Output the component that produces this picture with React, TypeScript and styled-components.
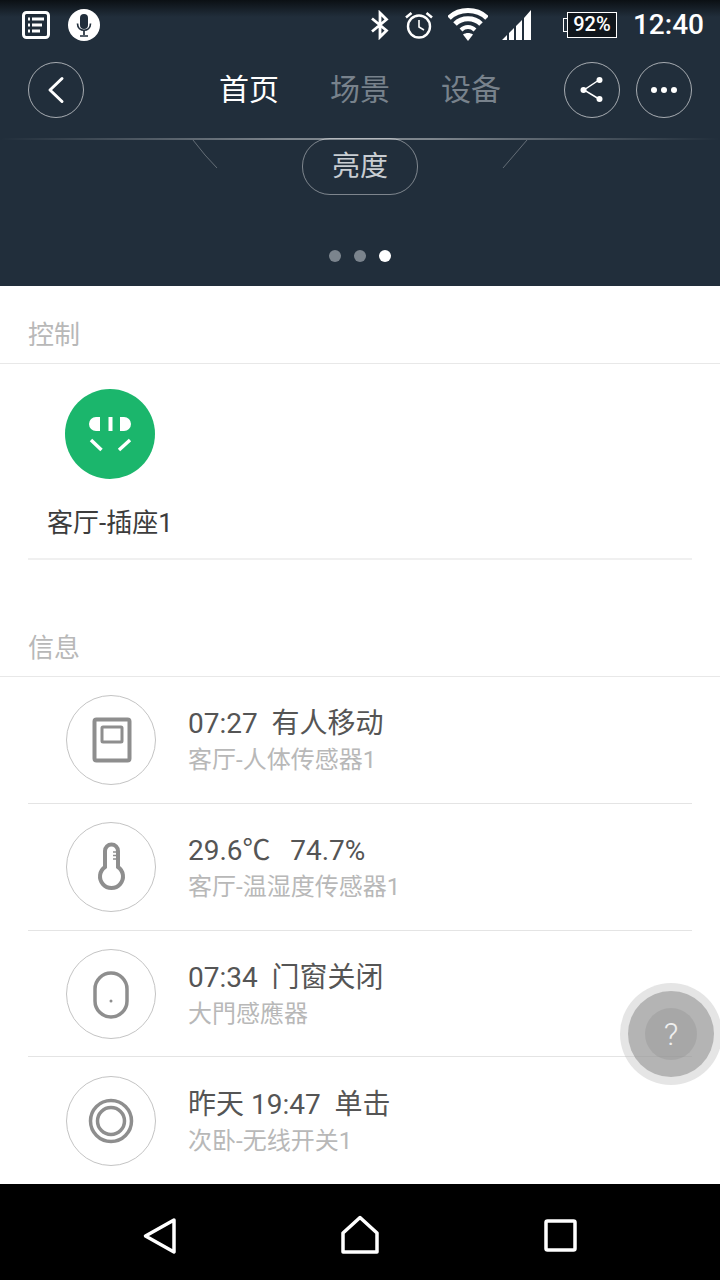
import React from "react";
import styled, { createGlobalStyle } from "styled-components";

const GlobalStyle = createGlobalStyle`
  html, body {
    margin: 0;
    padding: 0;
    background: #ffffff;
  }
  * {
    box-sizing: border-box;
  }
`;

const CJK = `Roboto, "Noto Sans CJK SC", sans-serif`;

const infoRows = [
  { title: "07:27  有人移动", sub: "客厅-人体传感器1", kind: "sensor" },
  { title: "29.6℃  \u200974.7%", sub: "客厅-温湿度传感器1", kind: "temp" },
  { title: "07:34  门窗关闭", sub: "大門感應器", kind: "door", short: true },
  { title: "昨天 19:47  单击", sub: "次卧-无线开关1", kind: "switch" },
];

function RowIcon({ kind }: { kind: string }) {
  return (
    <svg width="88" height="88" viewBox="1 1 88 88" fill="none" stroke="#8e8e8e">
      {kind === "sensor" && (
        <>
          <rect x="28.5" y="24.5" width="35" height="41" rx="2" strokeWidth="4" />
          <rect x="36" y="32" width="20" height="15" rx="1" strokeWidth="3" />
        </>
      )}
      {kind === "temp" && (
        <>
          <path
            d="M39 45V29a6.5 6.5 0 0 1 13 0V45a11.5 11.5 0 1 1-13 0Z"
            strokeWidth="4"
          />
          <path d="M47 30h5M47 33.500h5M47 37h5" strokeWidth="1.5" />
        </>
      )}
      {kind === "door" && (
        <>
          <rect x="29" y="24" width="32" height="44" rx="16" strokeWidth="3.500" />
          <circle cx="45" cy="52" r="1.500" fill="#8e8e8e" stroke="none" />
        </>
      )}
      {kind === "switch" && (
        <>
          <circle cx="45" cy="45" r="20.500" strokeWidth="3.500" />
          <circle cx="45" cy="45" r="13.500" strokeWidth="3.500" />
        </>
      )}
    </svg>
  );
}

function App() {
  return (
    <Page>
      <GlobalStyle />
      <Header>
        <StatusBar>
          <StatusLeft>
            <svg width="30" height="30" viewBox="0 0 30 30">
              <rect x="2.500" y="2.500" width="25" height="25" rx="3" fill="none" stroke="#fff" strokeWidth="3" />
              <path d="M7 9h2M7 15h2M7 21h2" stroke="#fff" strokeWidth="3" />
              <path d="M11 9h12M11 15h10M11 21h8" stroke="#fff" strokeWidth="3" />
            </svg>
            <svg width="32" height="32" viewBox="0 0 32 32">
              <circle cx="16" cy="16" r="16" fill="#fff" />
              <rect x="12" y="5" width="8" height="15" rx="4" fill="#212e3b" />
              <path d="M9.500 14.500c0 9 13 9 13 0M16 22v4M12 27h8" fill="none" stroke="#212e3b" strokeWidth="1.700" />
            </svg>
          </StatusLeft>
          <StatusRight>
            <svg width="20" height="30" viewBox="0 0 20 30">
              <path d="M2 8.500 16.500 20.500 10 27V3l6.500 6.500L2 21.500" fill="none" stroke="#fff" strokeWidth="2.800" />
            </svg>
            <svg width="30" height="30" viewBox="0 0 30 30">
              <circle cx="15" cy="16.500" r="11" fill="none" stroke="#fff" strokeWidth="2.400" />
              <path d="M15 10v7l5 3" fill="none" stroke="#fff" strokeWidth="1.600" />
              <path d="M2 7.500 7.500 3M28 7.500 22.500 3" fill="none" stroke="#fff" strokeWidth="2.600" />
            </svg>
            <svg width="40" height="34" viewBox="0 0 40 34">
              <path d="M1 10C11 0 29 0 39 10" fill="none" stroke="#fff" strokeWidth="5" />
              <path d="M7 16C14 9 26 9 33 16" fill="none" stroke="#fff" strokeWidth="5" />
              <path d="M13 22C17 18 23 18 27 22" fill="none" stroke="#fff" strokeWidth="4" />
              <path d="M15 26.500C18 24.500 22 24.500 25 26.500L20 33Z" fill="#fff" />
            </svg>
            <svg width="30" height="30" viewBox="0 0 30 30">
              <path d="M0 30 5 25V30ZM7 23 12 18V30H7ZM14 16 20 10V30H14ZM22 8 29 0V30H22Z" fill="#fff" />
            </svg>
            <Battery>
              <BatteryNub />
              <BatteryBody>92%</BatteryBody>
            </Battery>
            <Clock>12:40</Clock>
          </StatusRight>
        </StatusBar>

        <NavRow>
          <NavSide>
            <CircleButton>
              <svg width="28" height="32" viewBox="0 0 28 32">
                <path d="M20 4.500 8 16l12 11.500" fill="none" stroke="#fff" strokeWidth="3" strokeLinecap="round" strokeLinejoin="round" />
              </svg>
            </CircleButton>
          </NavSide>
          <Tabs>
            <Tab $active>首页</Tab>
            <Tab>场景</Tab>
            <Tab>设备</Tab>
          </Tabs>
          <NavSide $right>
            <CircleButton>
              <svg width="30" height="30" viewBox="0 0 30 30" fill="#fff">
                <path d="M22 5 7 15l15 9" fill="none" stroke="#fff" strokeWidth="1.500" />
                <circle cx="6.500" cy="15" r="3" />
                <circle cx="22.500" cy="5" r="3" />
                <circle cx="22.500" cy="24" r="3" />
              </svg>
            </CircleButton>
            <CircleButton>
              <svg width="30" height="10" viewBox="0 0 30 10" fill="#fff">
                <circle cx="5" cy="5" r="3" />
                <circle cx="15" cy="5" r="3" />
                <circle cx="25" cy="5" r="3" />
              </svg>
            </CircleButton>
          </NavSide>
        </NavRow>

        <Gauge>
          <GaugeLines width="720" height="32" viewBox="0 0 720 32">
            <defs>
              <linearGradient id="gaugeLine" x1="0" x2="1" y1="0" y2="0">
                <stop offset="0" stopColor="#fff" stopOpacity="0" />
                <stop offset="0.4" stopColor="#fff" stopOpacity="0.42" />
                <stop offset="0.6" stopColor="#fff" stopOpacity="0.42" />
                <stop offset="1" stopColor="#fff" stopOpacity="0" />
              </linearGradient>
            </defs>
            <rect x="0" y="0" width="720" height="2" fill="url(#gaugeLine)" />
            <path d="M193 2 205 17 217 30M527 2 515 16 503 30" fill="none" stroke="#fff" strokeOpacity="0.3" strokeWidth="1" />
          </GaugeLines>
          <Pill>亮度</Pill>
        </Gauge>

        <Dots>
          <Dot />
          <Dot />
          <Dot $active />
        </Dots>
      </Header>

      <Body>
        <SectionTitle>控制</SectionTitle>
        <ControlBlock>
          <ControlItem>
            <svg width="90" height="90" viewBox="0 0 90 90">
              <circle cx="45" cy="45" r="45" fill="#1bb66c" />
              <path d="M35 28h-4a7 7 0 0 0 0 14h4ZM55 28h4a7 7 0 0 1 0 14h-4Z" fill="#fff" />
              <rect x="43.500" y="28" width="4" height="14" fill="#fff" />
              <path d="M26 51 36.500 61M65 51 54 61" stroke="#fff" strokeWidth="3.500" />
            </svg>
            <ControlLabel>客厅-插座1</ControlLabel>
          </ControlItem>
        </ControlBlock>

        <SectionTitle $spaced>信息</SectionTitle>
        {infoRows.map((row, i) => (
          <InfoRow key={row.sub} $last={i === infoRows.length - 1} $short={row.short}>
            <IconRing>
              <RowIcon kind={row.kind} />
            </IconRing>
            <InfoText>
              <InfoTitle>{row.title}</InfoTitle>
              <InfoSub>{row.sub}</InfoSub>
            </InfoText>
          </InfoRow>
        ))}
      </Body>

      <BottomNav>
        <svg width="40" height="42" viewBox="0 0 40 42">
          <path d="M34 6 5.500 22 34 38Z" fill="none" stroke="#fff" strokeWidth="3.500" strokeLinejoin="round" />
        </svg>
        <svg width="40" height="42" viewBox="0 0 40 42">
          <path d="M20 3.500 37 19V38H3V19Z" fill="none" stroke="#fff" strokeWidth="3.500" strokeLinejoin="round" />
        </svg>
        <svg width="40" height="42" viewBox="0 0 40 42">
          <rect x="6" y="7" width="29" height="29" rx="1.500" fill="none" stroke="#fff" strokeWidth="3.500" />
        </svg>
      </BottomNav>

      <Fab>
        <FabInner>
          <FabCore>?</FabCore>
        </FabInner>
      </Fab>
    </Page>
  );
}

export default App;

const Page = styled.div`
  position: relative;
  width: 720px;
  height: 1280px;
  overflow: hidden;
  display: flex;
  flex-direction: column;
  background: #ffffff;
  font-family: ${CJK};
`;

const Header = styled.div`
  height: 286px;
  flex-shrink: 0;
  background: linear-gradient(#0b1014 0, #212e3b 17px);
  background-color: #212e3b;
  display: flex;
  flex-direction: column;
`;

const StatusBar = styled.div`
  height: 50px;
  display: flex;
  align-items: center;
  justify-content: space-between;
  padding: 0 16px 0 21px;
`;

const StatusLeft = styled.div`
  display: flex;
  align-items: center;
  gap: 17px;
`;

const StatusRight = styled.div`
  display: flex;
  align-items: center;
  gap: 14px;
`;

const Battery = styled.div`
  display: flex;
  align-items: center;
  margin-left: 17px;
`;

const BatteryNub = styled.div`
  width: 4px;
  height: 14px;
  border: 1.5px solid #ffffff;
  border-right: none;
`;

const BatteryBody = styled.div`
  width: 50px;
  height: 26px;
  border: 1.5px solid #ffffff;
  color: #ffffff;
  background: #10161c;
  font: 500 20px/23px Roboto, sans-serif;
  text-align: center;
`;

const Clock = styled.div`
  margin-left: 2px;
  color: #ffffff;
  font: 500 28px/32px Roboto, sans-serif;
`;

const NavRow = styled.div`
  margin-top: 12px;
  height: 56px;
  padding: 0 28px;
  display: grid;
  grid-template-columns: 1fr auto 1fr;
  align-items: center;
`;

const NavSide = styled.div<{ $right?: boolean }>`
  display: flex;
  gap: 16px;
  justify-content: ${(p) => (p.$right ? "flex-end" : "flex-start")};
`;

const CircleButton = styled.div`
  width: 56px;
  height: 56px;
  border-radius: 50%;
  border: 1px solid rgba(255, 255, 255, 0.6);
  display: flex;
  align-items: center;
  justify-content: center;
`;

const Tabs = styled.div`
  display: flex;
  gap: 51px;
`;

const Tab = styled.div<{ $active?: boolean }>`
  font-size: 30px;
  line-height: 40px;
  font-weight: 400;
  color: ${(p) => (p.$active ? "#ffffff" : "#78828c")};
`;

const Gauge = styled.div`
  position: relative;
  margin-top: 20px;
  height: 57px;
  display: flex;
  justify-content: center;
`;

const GaugeLines = styled.svg`
  position: absolute;
  left: 0;
  top: 0;
`;

const Pill = styled.div`
  width: 116px;
  height: 57px;
  border: 1px solid rgba(255, 255, 255, 0.42);
  border-radius: 28px;
  color: #c8cdd2;
  font-size: 28px;
  font-weight: 400;
  line-height: 55px;
  text-align: center;
`;

const Dots = styled.div`
  margin-top: 55px;
  display: flex;
  justify-content: center;
  gap: 13px;
`;

const Dot = styled.div<{ $active?: boolean }>`
  width: 12px;
  height: 12px;
  border-radius: 50%;
  background: ${(p) => (p.$active ? "#ffffff" : "#7b848d")};
`;

const Body = styled.div`
  flex: 1;
  min-height: 0;
  overflow: hidden;
  display: flex;
  flex-direction: column;
`;

const SectionTitle = styled.div<{ $spaced?: boolean }>`
  height: ${(p) => (p.$spaced ? "117px" : "78px")};
  flex-shrink: 0;
  padding: 0 28px 10px;
  display: flex;
  align-items: flex-end;
  border-bottom: 1px solid #e8e8e8;
  color: #b8b8b8;
  font-size: 26px;
  line-height: 36px;
  font-weight: 400;
`;

const ControlBlock = styled.div`
  margin: 0 28px;
  height: 196px;
  flex-shrink: 0;
  border-bottom: 2px solid #f0f0f0;
`;

const ControlItem = styled.div`
  width: 164px;
  padding-top: 25px;
  display: flex;
  flex-direction: column;
  align-items: center;
`;

const ControlLabel = styled.div`
  margin-top: 26px;
  color: #3c3c3c;
  font-size: 26px;
  line-height: 36px;
  font-weight: 400;
  white-space: nowrap;
`;

const InfoRow = styled.div<{ $last?: boolean; $short?: boolean }>`
  margin: 0 28px;
  height: ${(p) => (p.$short ? "126px" : "127px")};
  flex-shrink: 0;
  display: flex;
  align-items: center;
  padding-left: 38px;
  gap: 32px;
  border-bottom: ${(p) => (p.$last ? "none" : "1px solid #e4e4e4")};
`;

const IconRing = styled.div`
  width: 90px;
  height: 90px;
  border-radius: 50%;
  border: 1px solid #c4c4c4;
`;

const InfoText = styled.div`
  display: flex;
  flex-direction: column;
  padding-top: 2px;
`;

const InfoTitle = styled.div`
  color: #555555;
  font-size: 28px;
  line-height: 38px;
  font-weight: 400;
  white-space: pre;
`;

const InfoSub = styled.div`
  color: #b8b8b8;
  font-size: 24px;
  line-height: 34px;
  font-weight: 400;
  white-space: pre;
`;

const BottomNav = styled.div`
  height: 96px;
  flex-shrink: 0;
  padding-top: 5px;
  background: #000000;
  display: flex;
  align-items: center;
  justify-content: center;
  gap: 160px;
`;

const Fab = styled.div`
  position: absolute;
  left: 620px;
  top: 983px;
  width: 102px;
  height: 102px;
  border-radius: 50%;
  background: rgba(190, 190, 190, 0.4);
  display: flex;
  align-items: center;
  justify-content: center;
`;

const FabInner = styled.div`
  width: 86px;
  height: 86px;
  border-radius: 50%;
  background: rgba(140, 140, 140, 0.55);
  display: flex;
  align-items: center;
  justify-content: center;
`;

const FabCore = styled.div`
  width: 52px;
  height: 52px;
  border-radius: 50%;
  background: rgba(140, 140, 140, 0.3);
  color: #efefef;
  font: 300 32px/52px Roboto, sans-serif;
  text-align: center;
`;
